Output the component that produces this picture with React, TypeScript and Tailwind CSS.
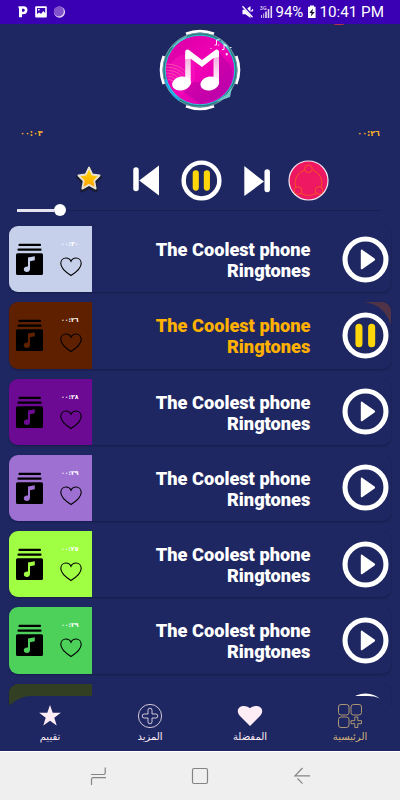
import React from 'react';

interface Track {
  id: number;
  time: string;
  color: string;
  active?: boolean;
}

const tracks: Track[] = [
  { id: 1, time: '٠٠:٣٠', color: 'bg-[#c7d0eb]' },
  { id: 2, time: '٠٠:٢٦', color: 'bg-[#5f2000]', active: true },
  { id: 3, time: '٠٠:٢٨', color: 'bg-[#6d0a93]' },
  { id: 4, time: '٠٠:٢٩', color: 'bg-[#9e70d2]' },
  { id: 5, time: '٠٠:٢٥', color: 'bg-[#a0ff43]' },
  { id: 6, time: '٠٠:٢٩', color: 'bg-[#4dd15b]' },
  { id: 7, time: '٠٠:٢٧', color: 'bg-[#323f22]' },
];

const StatusBar: React.FC = () => (
  <div className="flex h-6 shrink-0 items-center bg-[#3a00b3] text-white">
    <svg className="ml-[18px]" width="48" height="14" viewBox="0 0 48 14">
      <path d="M0.5 1.2h5.2c2.5 0 3.8 1.6 3.8 3.8S8 9.3 5.4 9.3H4v3H1V3.4L0.5 3z M4 3.8v3h1.2c1 0 1.6-.6 1.6-1.5s-.6-1.5-1.6-1.5z" fill="#fff" fillRule="evenodd" />
      <rect x="17.2" y="1.3" width="11.6" height="11.3" rx="1" fill="#fff" />
      <path d="M19 3h8.2v5l-2-2-2 3-2-1.5L19 9z" fill="#3a00b3" />
      <circle cx="20.8" cy="4.7" r="0.9" fill="#fff" />
      <path d="M18.6 11.2l2-2.4 1.4 1.4 2-2.2 3 3.2z" fill="#fff" />
      <circle cx="41.5" cy="7.1" r="5.6" fill="#e3d5f7" />
      <circle cx="40.8" cy="6.4" r="5" fill="#8252cc" />
    </svg>
    <div className="ml-auto mr-[16px] flex items-center">
      <svg width="32" height="14" viewBox="0 0 32 14">
        <path d="M0.500 4.800h3L8.500 1v12L3.500 9.300h-3z" fill="#fff" />
        <path d="M1.300 0.800l10 11.500" stroke="#3a00b3" strokeWidth="2.600" />
        <path d="M0.500 1.300l10 11M9.500 6.500l1.500-2" stroke="#fff" strokeWidth="1.300" />
        <text x="17.8" y="5.3" fill="#fff" fontSize="5.5" fontFamily="Roboto">3G</text>
        <path d="M19.5 13v-3M21.7 13V8.5" stroke="#fff" strokeWidth="1" opacity="0.75" />
        <path d="M24 13V6.5M26.5 13V4M29.3 13V1" stroke="#fff" strokeWidth="1.6" opacity="0.85" />
      </svg>
      <span className="ml-[2px] w-[29px] whitespace-nowrap font-[Roboto] text-[15px] leading-6">94%</span>
      <svg className="ml-[2px]" width="10" height="14" viewBox="0 0 10 14">
        <path d="M3 .5h4v1.3h1.6V13H1V1.8h2z" fill="#fff" />
        <path d="M6 3.6L2.3 8h2.2l-.7 3.5L7.7 7H5.3z" fill="#170a3a" />
      </svg>
      <span className="ml-[3px] w-[64.500px] whitespace-nowrap font-[Roboto] text-[15.2px] leading-6">10:41 PM</span>
    </div>
  </div>
);

const Artwork: React.FC = () => (
  <svg width="84" height="84" viewBox="0 0 84 84">
    <defs>
      <linearGradient id="disc" x1="0" y1="0" x2="1" y2="1">
        <stop offset="0" stopColor="#d400a5" />
        <stop offset="0.5" stopColor="#f300b4" />
        <stop offset="1" stopColor="#c100b5" />
      </linearGradient>
      <linearGradient id="stem" x1="0" y1="0" x2="0" y2="1">
        <stop offset="0" stopColor="#f3a6dc" />
        <stop offset="1" stopColor="#fff" />
      </linearGradient>
    </defs>
    <path d="M28 5.800A38.800 38.800 0 0 1 56 5.800M28 78.200A38.800 38.800 0 0 0 56 78.200M5.800 28A38.800 38.800 0 0 0 5.800 56M78.200 28A38.800 38.800 0 0 1 78.200 56" fill="none" stroke="#fff" strokeWidth="2.800" />
    <circle cx="42" cy="42" r="37.200" fill="#257f80" stroke="#a5c6d0" strokeWidth="0.600" />
    <path d="M13 20l7-7 10-6-8 9zM62 11l8 7 3 8-8-10zM7 51l5 13 8 8-4-12zM58 74l11-8 5-7-2 10z" fill="#74c9c7" />
    <path d="M7.500 52q5 14 14 20" stroke="#18a8e8" strokeWidth="2.200" fill="none" />
    <circle cx="42" cy="42" r="34.800" fill="url(#disc)" stroke="#20d4df" strokeWidth="0.900" />
    <path d="M61 24l12 15c4 12-2 24-13 31L43 76 22 62l14-8 20 0z" fill="#a0009c" opacity="0.4" />
    <path d="M12 37a18 18 0 0 1 25-8v22L25 66q-11-5-15-17z" fill="#ff22c6" opacity="0.35" />
    <path d="M8 36q12 0 20 8M7.500 39q12 0 19 8M7.500 42q11 0 18 8M8 45q10 0 15 8M9 48q8 0 11 7M10 51q6 1 8 5" stroke="#ff63aa" strokeWidth="0.700" fill="none" />
    <rect x="27.200" y="26" width="5.500" height="30" fill="url(#stem)" />
    <rect x="55.500" y="26" width="5.500" height="30" fill="url(#stem)" />
    <path d="M27.200 31v-7c0-2.300 2.200-3.200 4-1.800L44 32l13-9.800c1.900-1.400 4-.5 4 1.800v5l-5.500 1L44 39l-11.300-8.300z" fill="#fff" />
    <ellipse cx="23.500" cy="55.500" rx="9.500" ry="6.800" transform="rotate(-13 23.500 55.500)" fill="#fff" />
    <ellipse cx="51.800" cy="55.500" rx="9.500" ry="6.800" transform="rotate(-13 51.800 55.500)" fill="#fff" />
    <path d="M58.500 17v-5l3-.5M66 21.500v-5l3 1.500" stroke="#fff" strokeWidth="0.900" fill="none" />
    <path d="M56.500 17h2M64 21.500h2M72 19.500h1.500M67.500 26h2.500M68.700 25v2.500M52.500 20.500h1M60.500 16.500v1" stroke="#fff" strokeWidth="1.200" opacity="0.9" />
  </svg>
);

const CircleButton: React.FC<{ size: number; playing?: boolean }> = ({ size, playing }) => (
  <svg width={size} height={size} viewBox="0 0 48 48" className="shrink-0">
    <circle cx="24" cy="24" r="20.9" fill="none" stroke="#fff" strokeWidth="5.2" />
    {playing ? (
      <path d="M17.3 15.7v16.6M30.300 15.7v16.6" stroke="#ffd60a" strokeWidth="7.2" strokeLinecap="round" />
    ) : (
      <path d="M19.2 15v18c0 1.3.8 1.5 1.7.8l12-8.5c1.2-.8 1.2-1.8 0-2.6l-12-8.5c-.9-.7-1.7-.4-1.7.8z" fill="#fff" />
    )}
  </svg>
);

const StarIcon: React.FC = () => (
  <svg width="32" height="32" viewBox="0 0 32 32">
    <defs>
      <linearGradient id="gold" x1="0" y1="0" x2="0" y2="1">
        <stop offset="0" stopColor="#ffe000" />
        <stop offset="1" stopColor="#ff9d00" />
      </linearGradient>
    </defs>
    <path d="M16 5.500l3.600 7.300 7.500 1.100-5.500 5.700 1.400 8L16 24l-7 3.600 1.400-8-5.500-5.700 7.500-1.100z" fill="#171b2c" stroke="#171b2c" strokeWidth="3.500" strokeLinejoin="round" opacity="0.85" />
    <path d="M16 4.500l3.300 7 7.300 1-5.300 5.400 1.400 7.700-6.700-3.700-6.700 3.700 1.400-7.700-5.300-5.400 7.300-1z" fill="url(#gold)" stroke="#e8e2d4" strokeWidth="1.800" strokeLinejoin="round" />
  </svg>
);

const Player: React.FC = () => (
  <div className="flex h-[202px] shrink-0 flex-col">
    <div className="flex h-[96px] justify-center pt-[4px]">
      <Artwork />
    </div>
    <div className="flex h-[28px] items-center justify-between pl-[20px] pr-[20px] font-['DejaVu_Sans'] text-[8px] font-bold text-[#f5b02e]">
      <span>٠٠:٠٣</span>
      <span>٠٠:٢٦</span>
    </div>
    <div className="flex h-[50px] items-center pl-[73px] pt-[15px]">
      <div className="pb-1"><StarIcon /></div>
      <svg className="ml-[28px]" width="27" height="32" viewBox="0 0 27 32">
        <path d="M3 5v18.500" stroke="#fff" strokeWidth="5.500" strokeLinecap="round" />
        <path d="M26 0.500v30L6.200 15.500z" fill="#fff" />
      </svg>
      <div className="ml-[21px]"><CircleButton size={41} playing /></div>
      <svg className="ml-[22px]" width="27" height="32" viewBox="0 0 27 32">
        <path d="M23.200 7v17.500" stroke="#fff" strokeWidth="5.500" strokeLinecap="round" />
        <path d="M0.300 1v30L20 16.500z" fill="#fff" />
      </svg>
      <svg className="ml-[17px]" width="41" height="41" viewBox="0 0 41 41">
        <circle cx="20.500" cy="20.500" r="19.500" fill="#ed1762" stroke="#f3e5f0" strokeWidth="1.200" />
        <g fill="none" stroke="#f45128" strokeWidth="1">
          <circle cx="20.500" cy="8.800" r="3.800" />
          <circle cx="10" cy="30.500" r="3.800" />
          <circle cx="31" cy="30.500" r="3.800" />
          <path d="M16.600 10A13.600 13.600 0 0 0 7.800 27.500M24.400 10A13.600 13.600 0 0 1 33.200 27.500M13 33.500q7.500 4 15 0" />
        </g>
      </svg>
    </div>
    <div className="mt-[6px] flex h-3 items-center pl-[17px] pr-[18px]">
      <div className="h-[3px] w-[37px] bg-[#e5e4ef]" />
      <div className="size-3 rounded-full bg-white" />
      <div className="h-px flex-1 bg-[#19204f]" />
    </div>
  </div>
);

const TrackRow: React.FC<{ track: Track }> = ({ track }) => (
  <div className="relative flex h-[66.3px] shrink-0 overflow-hidden rounded-[9px] bg-[#1e2761] shadow-[0_1px_2px_#171d49]">
    <div className={`flex w-[83px] shrink-0 ${track.color}`}>
      <svg className="ml-[7px] mt-[17px]" width="27" height="33" viewBox="0 0 27 33">
        <path d="M3.500 1.900h20.500M2.500 6.700h22" stroke="#000" strokeWidth="2.200" strokeLinecap="round" />
        <path fillRule="evenodd" d="M1.500 10.200h24q1.500 0 1.500 1.500v18.800q0 1.500-1.500 1.500h-24q-1.500 0-1.500-1.500V11.700q0-1.500 1.500-1.500zM12 14.500v9c-2.300-.4-4.200 1-4.200 2.700 0 1.800 1.400 2.800 3 2.800 2 0 3.200-1.300 3.200-3.300v-7.500l4.800-1v-4z" fill="#000" />
      </svg>
      <div className="ml-[17px] flex flex-col pt-[13px]">
        <span className="h-[10px] whitespace-nowrap pl-px font-['DejaVu_Sans'] text-[6.2px] font-bold leading-[10px] text-white">{track.time}</span>
        <svg className="mt-[8px]" width="22" height="20" viewBox="0 0 22 20">
          <path d="M11 18.500Q.8 12 .8 6.500C.8 3.500 2.900 1 6 1c2.400 0 4.200 1.400 5 3.300C11.800 2.400 13.600 1 16 1c3.100 0 5.200 2.500 5.200 5.500Q21.200 12 11 18.500z" fill="none" stroke="#000" strokeWidth="1.100" />
        </svg>
      </div>
    </div>
    <p className={`ml-auto w-[180px] pt-[13px] text-right font-[Roboto] text-[18.2px] font-black leading-[21px] ${track.active ? 'text-[#ffb000]' : 'text-white'}`}>
      The Coolest phone Ringtones
    </p>
    {track.active && (
      <svg className="absolute right-0 top-0" width="27" height="23" viewBox="0 0 27 23">
        <path d="M0 0h27v23Q21 3 0 0z" fill="#503346" />
      </svg>
    )}
    <div className="relative ml-[31.500px] mr-[2.200px] pt-[9.500px]">
      <CircleButton size={47} playing={track.active} />
    </div>
  </div>
);

const NavItem: React.FC<{ label: string; active?: boolean; children: React.ReactNode }> = ({ label, active, children }) => (
  <div className={`flex w-[100px] flex-col items-center pt-[7px] ${active ? 'text-[#d1b279]' : 'text-[#ffedf6]'}`}>
    <svg width="26" height="26" viewBox="0 0 26 26" fill="none">
      {children}
    </svg>
    <span dir="rtl" className="font-['DejaVu_Sans'] text-[10px] leading-[16px]">{label}</span>
  </div>
);

const BottomNav: React.FC = () => (
  <div className="absolute inset-x-0 bottom-0 flex h-[55px] rounded-t-[32px] bg-[#1e2761]">
    <NavItem label="تقييم">
      <path d="M13 2l2.700 7.800h8.100l-6.500 4.900 2.400 7.900-6.700-4.800-6.700 4.800 2.400-7.900-6.500-4.900h8.100z" fill="currentColor" />
    </NavItem>
    <NavItem label="المزيد">
      <circle cx="13" cy="13" r="11.600" stroke="currentColor" strokeWidth="0.800" />
      <path d="M13 5.200q2 0 2 2V11h3.800q2 0 2 2t-2 2H15v3.800q0 2-2 2t-2-2V15H7.200q-2 0-2-2t2-2H11V7.200q0-2 2-2z" stroke="currentColor" strokeWidth="0.800" />
    </NavItem>
    <NavItem label="المفضلة">
      <path d="M13 23L3 13C-1.500 8 1.500 3 6.700 3 9.500 3 12 4.300 13 5.300 14 4.300 16.500 3 19.300 3c5.200 0 8.200 5 3.700 10z" fill="currentColor" />
    </NavItem>
    <NavItem label="الرئيسية" active>
      <g stroke="currentColor" strokeWidth="0.800">
        <rect x="1.500" y="1.500" width="10.500" height="10.500" rx="2.500" />
        <rect x="14" y="1.500" width="10.500" height="10.500" rx="2.500" />
        <rect x="1.500" y="14" width="10.500" height="10.500" rx="2.500" />
        <path d="M17.800 14h3v3.700h3.700v3h-3.700v3.800h-3v-3.800H14v-3h3.800z" strokeLinejoin="round" />
      </g>
    </NavItem>
  </div>
);

const SystemNav: React.FC = () => (
  <div className="flex h-[49px] shrink-0 items-center justify-between border-t border-white bg-[#efefef] px-[90px]">
    <svg width="17" height="18" viewBox="0 0 17 18" fill="none" stroke="#858585" strokeWidth="1.200">
      <path d="M1 7.500h12.500q1.700 0 1.700-1.700V.5M16 10.700H3.200q-1.700 0-1.700 1.700V18" />
    </svg>
    <svg width="18" height="18" viewBox="0 0 18 18" fill="none" stroke="#858585" strokeWidth="1.200">
      <rect x="1.500" y="1.500" width="15" height="15" rx="1.500" />
    </svg>
    <svg width="17" height="18" viewBox="0 0 17 18" fill="none" stroke="#858585" strokeWidth="1.200">
      <path d="M9.500 1L2 8.800h15M4.500 11.500l5 5.200" />
    </svg>
  </div>
);

export default function App() {
  return (
    <div className="flex h-[800px] w-[400px] flex-col overflow-hidden bg-[#1e2761]">
      <StatusBar />
      <div className="relative flex min-h-0 flex-1 flex-col overflow-hidden">
        <div className="absolute right-[55px] top-[-5px] h-1.5 w-3 rounded-full bg-[#b63144]" />
        <Player />
        <div className="flex flex-col gap-[10px] px-[9px]">
          {tracks.map(track => (
            <TrackRow key={track.id} track={track} />
          ))}
        </div>
        <BottomNav />
      </div>
      <SystemNav />
    </div>
  );
}
